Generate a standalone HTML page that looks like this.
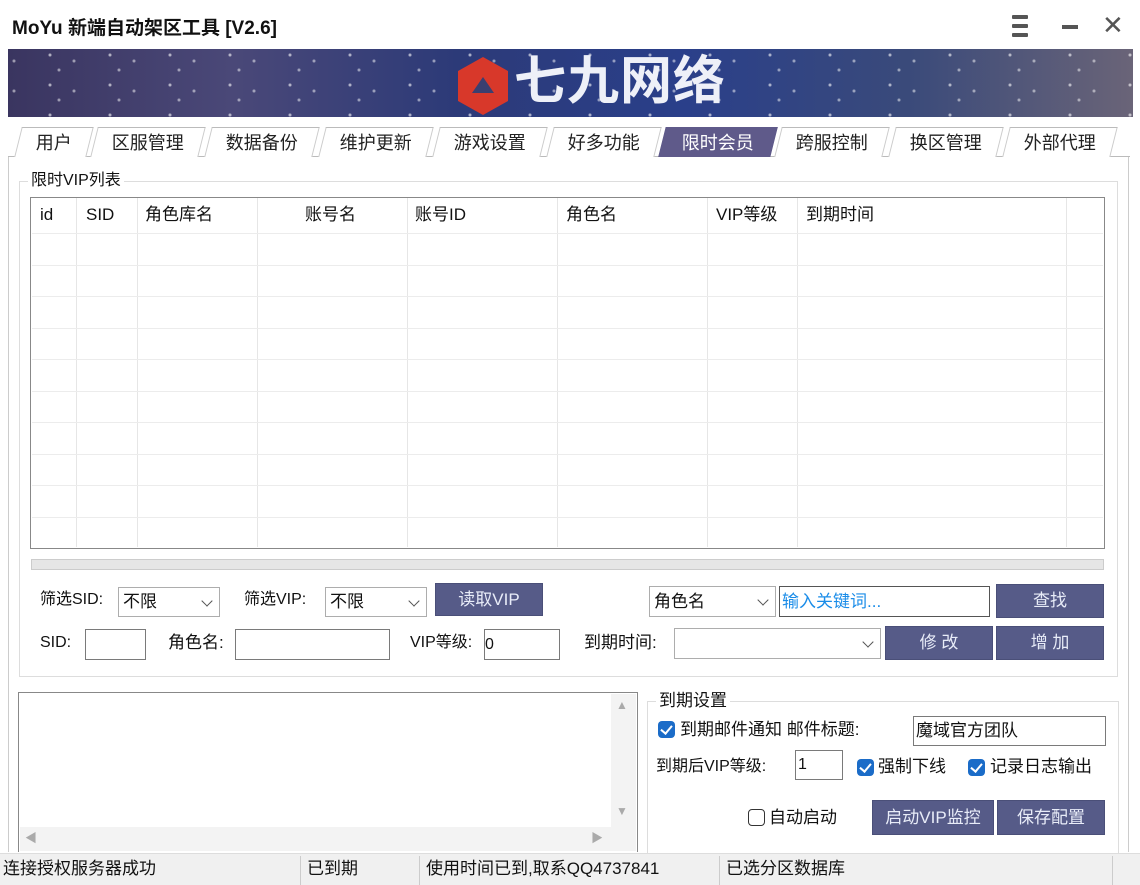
<!DOCTYPE html>
<html><head><meta charset="utf-8"><style>
*{margin:0;padding:0;box-sizing:border-box}
body{width:1140px;height:885px;background:#fff;position:relative;overflow:hidden;font-family:"Liberation Sans","Noto Sans CJK SC",sans-serif;font-size:16px;color:#111}
.a{position:absolute}
.btn{position:absolute;background:#565b88;color:#e8ecf8;font-size:17px;text-align:center;border:1px solid #4a4f78}
.inp{position:absolute;background:#fff;border:1px solid #7a7a7a}
.sel{position:absolute;background:#fff;border:1px solid #adadad;font-size:17px;padding-left:4px}
.sel:after{content:"";position:absolute;right:8px;top:9px;width:7px;height:7px;border-right:1px solid #555;border-bottom:1px solid #555;transform:rotate(45deg)}
.lbl{position:absolute;font-size:16px;white-space:nowrap;line-height:20px}
.tab{position:absolute;top:127px;height:30px;font-size:18px;color:#222;text-align:center;line-height:30px;border-top:1px solid #bbb;border-left:1px solid #ccc;border-right:1px solid #ccc;background:#fff;transform:skewX(-14deg)}
.tab span{display:inline-block;transform:skewX(14deg)}
.cb{position:absolute;width:17px;height:17px;border-radius:4px;background:#1b6cc8}
.cb:after{content:"";position:absolute;left:5px;top:2px;width:5px;height:9px;border-right:2px solid #fff;border-bottom:2px solid #fff;transform:rotate(40deg)}
.vl{position:absolute;top:198px;width:1px;height:349px;background:#e6e6e6}
.hl{position:absolute;left:32px;width:1071px;height:1px;background:#ececec}
</style></head><body>
<div class="a" style="left:12px;top:13px;font-size:19px;font-weight:bold">MoYu 新端自动架区工具 [V2.6]</div>
<div class="a" style="left:1012px;top:15px;width:16px;height:4px;background:#555;border-radius:1px"></div>
<div class="a" style="left:1012px;top:24px;width:16px;height:4px;background:#555;border-radius:1px"></div>
<div class="a" style="left:1012px;top:33px;width:16px;height:4px;background:#555;border-radius:1px"></div>
<div class="a" style="left:1062px;top:25px;width:16px;height:4px;background:#555"></div>
<div class="a" style="left:1102px;top:10px;font-size:26px;color:#555">✕</div>
<div class="a" style="left:8px;top:49px;width:1125px;height:68px;background:linear-gradient(90deg,#3a3560 0%,#4a4878 20%,#2c3a78 40%,#2a3f8a 60%,#3a4a7a 80%,#6a6478 100%)"></div>
<div class="a" style="left:8px;top:49px;width:1125px;height:68px;background:radial-gradient(circle at 10% 40%,rgba(255,255,255,.5) 1px,transparent 2px),radial-gradient(circle at 70% 20%,rgba(255,255,255,.6) 1px,transparent 2px),radial-gradient(circle at 85% 70%,rgba(255,255,255,.5) 1px,transparent 2px);background-size:60px 30px"></div>
<svg class="a" style="left:454px;top:55px" width="58" height="62"><polygon points="29,2 54,16 54,46 29,60 4,46 4,16" fill="#d8382a"/><polygon points="29,22 40,38 18,38" fill="#3a3f70"/></svg>
<div class="a" style="left:514px;top:50px;font-size:52px;font-weight:bold;color:#eef0f8;letter-spacing:1px;line-height:64px">七九网络</div>
<div class="a" style="left:8px;top:156px;width:1122px;height:1px;background:#bbb"></div>
<div class="tab" style="left:18px;width:72px"><span>用户</span></div>
<div class="tab" style="left:94px;width:108px"><span>区服管理</span></div>
<div class="tab" style="left:208px;width:108px"><span>数据备份</span></div>
<div class="tab" style="left:322px;width:108px"><span>维护更新</span></div>
<div class="tab" style="left:436px;width:108px"><span>游戏设置</span></div>
<div class="tab" style="left:550px;width:108px"><span>好多功能</span></div>
<div class="tab" style="left:662px;width:112px;background:#5f5a8a;color:#fff;border-color:#5f5a8a"><span>限时会员</span></div>
<div class="tab" style="left:778px;width:108px"><span>跨服控制</span></div>
<div class="tab" style="left:892px;width:108px"><span>换区管理</span></div>
<div class="tab" style="left:1006px;width:108px"><span>外部代理</span></div>
<div class="a" style="left:8px;top:157px;width:1px;height:695px;background:#ccc"></div>
<div class="a" style="left:1128px;top:157px;width:1px;height:695px;background:#ccc"></div>
<div class="a" style="left:19px;top:181px;width:1099px;height:496px;border:1px solid #ddd"></div>
<div class="lbl" style="left:28px;top:171px;background:#fff;padding:0 3px;font-size:16px">限时VIP列表</div>
<div class="a" style="left:30px;top:197px;width:1075px;height:352px;border:1px solid #888;background:#fff"></div>
<div class="vl" style="left:76px"></div><div class="vl" style="left:137px"></div><div class="vl" style="left:257px"></div><div class="vl" style="left:407px"></div><div class="vl" style="left:557px"></div><div class="vl" style="left:707px"></div><div class="vl" style="left:797px"></div><div class="vl" style="left:1066px"></div>
<div class="hl" style="top:233px"></div><div class="hl" style="top:265px"></div><div class="hl" style="top:296px"></div><div class="hl" style="top:328px"></div><div class="hl" style="top:359px"></div><div class="hl" style="top:391px"></div><div class="hl" style="top:422px"></div><div class="hl" style="top:454px"></div><div class="hl" style="top:485px"></div><div class="hl" style="top:517px"></div>
<div class="lbl" style="left:40px;top:205px;font-size:17px">id</div>
<div class="lbl" style="left:86px;top:205px;font-size:17px">SID</div>
<div class="lbl" style="left:145px;top:205px;font-size:17px">角色库名</div>
<div class="lbl" style="left:305px;top:205px;font-size:17px">账号名</div>
<div class="lbl" style="left:415px;top:205px;font-size:17px">账号ID</div>
<div class="lbl" style="left:566px;top:205px;font-size:17px">角色名</div>
<div class="lbl" style="left:716px;top:205px;font-size:17px">VIP等级</div>
<div class="lbl" style="left:806px;top:205px;font-size:17px">到期时间</div>
<div class="a" style="left:31px;top:559px;width:1073px;height:11px;background:#e6e6e6;border:1px solid #ccc"></div>
<div class="lbl" style="left:40px;top:590px">筛选SID:</div>
<div class="sel" style="left:118px;top:587px;width:102px;height:30px;line-height:28px">不限</div>
<div class="lbl" style="left:244px;top:590px">筛选VIP:</div>
<div class="sel" style="left:325px;top:587px;width:102px;height:30px;line-height:28px">不限</div>
<div class="btn" style="left:435px;top:583px;width:108px;height:33px;line-height:31px">读取VIP</div>
<div class="sel" style="left:649px;top:586px;width:127px;height:31px;line-height:29px">角色名</div>
<div class="a" style="left:779px;top:586px;width:211px;height:31px;border:1px solid #555;color:#1a8ce8;font-size:17px;line-height:29px;padding-left:2px">输入关键词...</div>
<div class="btn" style="left:996px;top:584px;width:108px;height:34px;line-height:32px">查找</div>
<div class="lbl" style="left:40px;top:633px">SID:</div>
<div class="inp" style="left:85px;top:629px;width:61px;height:31px"></div>
<div class="lbl" style="left:168px;top:633px;font-size:17px">角色名:</div>
<div class="inp" style="left:235px;top:629px;width:155px;height:31px"></div>
<div class="lbl" style="left:410px;top:633px">VIP等级:</div>
<div class="inp" style="left:484px;top:629px;width:76px;height:31px;font-size:16px;line-height:29px">0</div>
<div class="lbl" style="left:584px;top:633px;font-size:17px">到期时间:</div>
<div class="sel" style="left:674px;top:628px;width:207px;height:31px"></div>
<div class="btn" style="left:885px;top:626px;width:108px;height:34px;line-height:32px">修 改</div>
<div class="btn" style="left:996px;top:626px;width:108px;height:34px;line-height:32px">增 加</div>
<div class="a" style="left:18px;top:692px;width:620px;height:160px;border:1px solid #888;border-bottom:none;background:#fff"></div>
<div class="a" style="left:611px;top:694px;width:25px;height:136px;background:#f3f3f3"></div>
<div class="a" style="left:616px;top:698px;color:#aaa;font-size:12px">▲</div>
<div class="a" style="left:616px;top:804px;color:#aaa;font-size:12px">▼</div>
<div class="a" style="left:20px;top:827px;width:616px;height:24px;background:#f3f3f3"></div>
<div class="a" style="left:25px;top:829px;color:#aaa;font-size:12px">◀</div>
<div class="a" style="left:591px;top:829px;color:#aaa;font-size:12px">▶</div>
<div class="a" style="left:647px;top:701px;width:472px;height:152px;border:1px solid #ddd;border-bottom:none"></div>
<div class="lbl" style="left:656px;top:691px;background:#fff;padding:0 3px;font-size:17px">到期设置</div>
<div class="cb" style="left:658px;top:721px"></div>
<div class="lbl" style="left:680px;top:720px;font-size:17px">到期邮件通知 邮件标题:</div>
<div class="inp" style="left:913px;top:716px;width:193px;height:30px;font-size:17px;line-height:28px;padding-left:2px">魔域官方团队</div>
<div class="lbl" style="left:656px;top:757px;font-size:16px">到期后VIP等级:</div>
<div class="inp" style="left:795px;top:750px;width:48px;height:30px;font-size:16px;line-height:28px;padding-left:2px">1</div>
<div class="cb" style="left:857px;top:759px"></div>
<div class="lbl" style="left:878px;top:757px;font-size:17px">强制下线</div>
<div class="cb" style="left:968px;top:759px"></div>
<div class="lbl" style="left:990px;top:757px;font-size:17px">记录日志输出</div>
<div class="a" style="left:748px;top:809px;width:17px;height:17px;border:1px solid #333;border-radius:4px"></div>
<div class="lbl" style="left:769px;top:808px;font-size:17px">自动启动</div>
<div class="btn" style="left:872px;top:800px;width:122px;height:35px;line-height:33px">启动VIP监控</div>
<div class="btn" style="left:997px;top:800px;width:108px;height:35px;line-height:33px">保存配置</div>
<div class="a" style="left:0;top:853px;width:1140px;height:32px;background:#f0f0f0;border-top:1px solid #ddd"></div>
<div class="a" style="left:300px;top:856px;width:1px;height:29px;background:#ccc"></div>
<div class="a" style="left:419px;top:856px;width:1px;height:29px;background:#ccc"></div>
<div class="a" style="left:719px;top:856px;width:1px;height:29px;background:#ccc"></div>
<div class="a" style="left:1112px;top:856px;width:1px;height:29px;background:#ccc"></div>
<div class="lbl" style="left:3px;top:859px;font-size:17px">连接授权服务器成功</div>
<div class="lbl" style="left:307px;top:859px;font-size:17px">已到期</div>
<div class="lbl" style="left:426px;top:859px;font-size:17px">使用时间已到,取系QQ4737841</div>
<div class="lbl" style="left:726px;top:859px;font-size:17px">已选分区数据库</div>
</body></html>
